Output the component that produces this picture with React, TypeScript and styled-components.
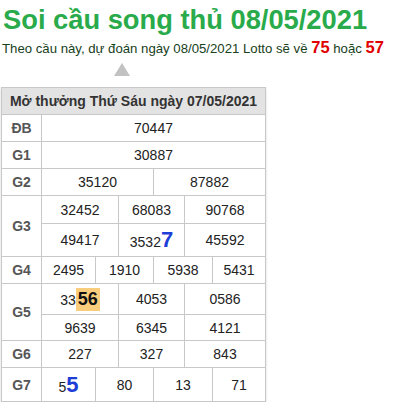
import React from 'react';
import styled, { createGlobalStyle } from 'styled-components';

const GlobalStyle = createGlobalStyle`
  body {
    margin: 0;
    background: #fff;
    font-family: 'Liberation Sans', Arial, sans-serif;
  }
`;

const Title = styled.h1`
  margin: 0;
  padding: 4px 0 0 3px;
  font-size: 27.3px;
  line-height: 32px;
  font-weight: bold;
  color: #2aab4b;
`;

const Subtitle = styled.p`
  margin: 3px 0 0;
  padding-left: 2px;
  font-size: 13.2px;
  line-height: 16px;
  color: #17401b;
`;

const Lotto = styled.b`
  color: #e00000;
  font-size: 16.5px;
`;

const Arrow = styled.div`
  width: 0;
  height: 0;
  margin: 6px 0 0 114px;
  border-left: 8px solid transparent;
  border-right: 8px solid transparent;
  border-bottom: 13px solid #c2c2c2;
`;

const Table = styled.div`
  margin: 11px 0 0 1px;
  width: max-content;
  border-left: 1px solid #c8c8c8;
  border-top: 1px solid #c8c8c8;
  box-shadow: 0 2px 2px rgba(0, 0, 0, 0.18);
`;

const Header = styled.div`
  height: 27px;
  box-sizing: border-box;
  border-right: 1px solid #c8c8c8;
  border-bottom: 1px solid #c8c8c8;
  background: #e3e3e3;
  display: flex;
  align-items: center;
  justify-content: center;
  font-size: 14px;
  font-weight: bold;
  color: #333;
`;

const PrizeRow = styled.div`
  display: grid;
  grid-template-columns: 40px 224px;
`;

const Label = styled.div`
  box-sizing: border-box;
  border-right: 1px solid #c8c8c8;
  border-bottom: 1px solid #c8c8c8;
  display: flex;
  align-items: center;
  justify-content: center;
  font-size: 14px;
  font-weight: bold;
  color: #555;
`;

const Numbers = styled.div`
  display: flex;
  flex-direction: column;
`;

const SubRow = styled.div<{ $cols: string; $h: number }>`
  display: grid;
  grid-template-columns: ${(p) => p.$cols};
  height: ${(p) => p.$h}px;
`;

const Cell = styled.div`
  box-sizing: border-box;
  border-right: 1px solid #c8c8c8;
  border-bottom: 1px solid #c8c8c8;
  display: flex;
  align-items: center;
  justify-content: center;
  font-size: 14px;
  color: #222;
`;

const Hit = styled.b`
  color: #1d3ed6;
  font-size: 22px;
  line-height: 22px;
`;

const Mark = styled.b`
  display: inline-block;
  padding: 0 2px;
  background: #f9cd7c;
  color: #111;
  font-size: 18px;
  line-height: 23px;
`;

const ONE = '224px';
const TWO = '112px 112px';
const THREE = '77px 66px 81px';
const FOUR = '54px 58px 59px 53px';

type Line = { cols: string; h: number; cells: React.ReactNode[] };

const prizes: { label: string; lines: Line[] }[] = [
  { label: 'ĐB', lines: [{ cols: ONE, h: 27, cells: ['70447'] }] },
  { label: 'G1', lines: [{ cols: ONE, h: 27, cells: ['30887'] }] },
  { label: 'G2', lines: [{ cols: TWO, h: 27, cells: ['35120', '87882'] }] },
  {
    label: 'G3',
    lines: [
      { cols: THREE, h: 28, cells: ['32452', '68083', '90768'] },
      {
        cols: THREE,
        h: 33,
        cells: ['49417', <span>3532<Hit>7</Hit></span>, '45592'],
      },
    ],
  },
  { label: 'G4', lines: [{ cols: FOUR, h: 27, cells: ['2495', '1910', '5938', '5431'] }] },
  {
    label: 'G5',
    lines: [
      { cols: THREE, h: 31, cells: [<span>33<Mark>56</Mark></span>, '4053', '0586'] },
      { cols: THREE, h: 26, cells: ['9639', '6345', '4121'] },
    ],
  },
  { label: 'G6', lines: [{ cols: THREE, h: 27, cells: ['227', '327', '843'] }] },
  {
    label: 'G7',
    lines: [{ cols: FOUR, h: 34, cells: [<span>5<Hit>5</Hit></span>, '80', '13', '71'] }],
  },
];

export default function App() {
  return (
    <>
      <GlobalStyle />
      <Title>Soi cầu song thủ 08/05/2021</Title>
      <Subtitle>
        Theo cầu này, dự đoán ngày 08/05/2021 Lotto sẽ về <Lotto>75</Lotto> hoặc{' '}
        <Lotto>57</Lotto>
      </Subtitle>
      <Arrow />
      <Table>
        <Header>Mở thưởng Thứ Sáu ngày 07/05/2021</Header>
        {prizes.map((p) => (
          <PrizeRow key={p.label}>
            <Label>{p.label}</Label>
            <Numbers>
              {p.lines.map((line, i) => (
                <SubRow key={i} $cols={line.cols} $h={line.h}>
                  {line.cells.map((c, j) => (
                    <Cell key={j}>{c}</Cell>
                  ))}
                </SubRow>
              ))}
            </Numbers>
          </PrizeRow>
        ))}
      </Table>
    </>
  );
}
